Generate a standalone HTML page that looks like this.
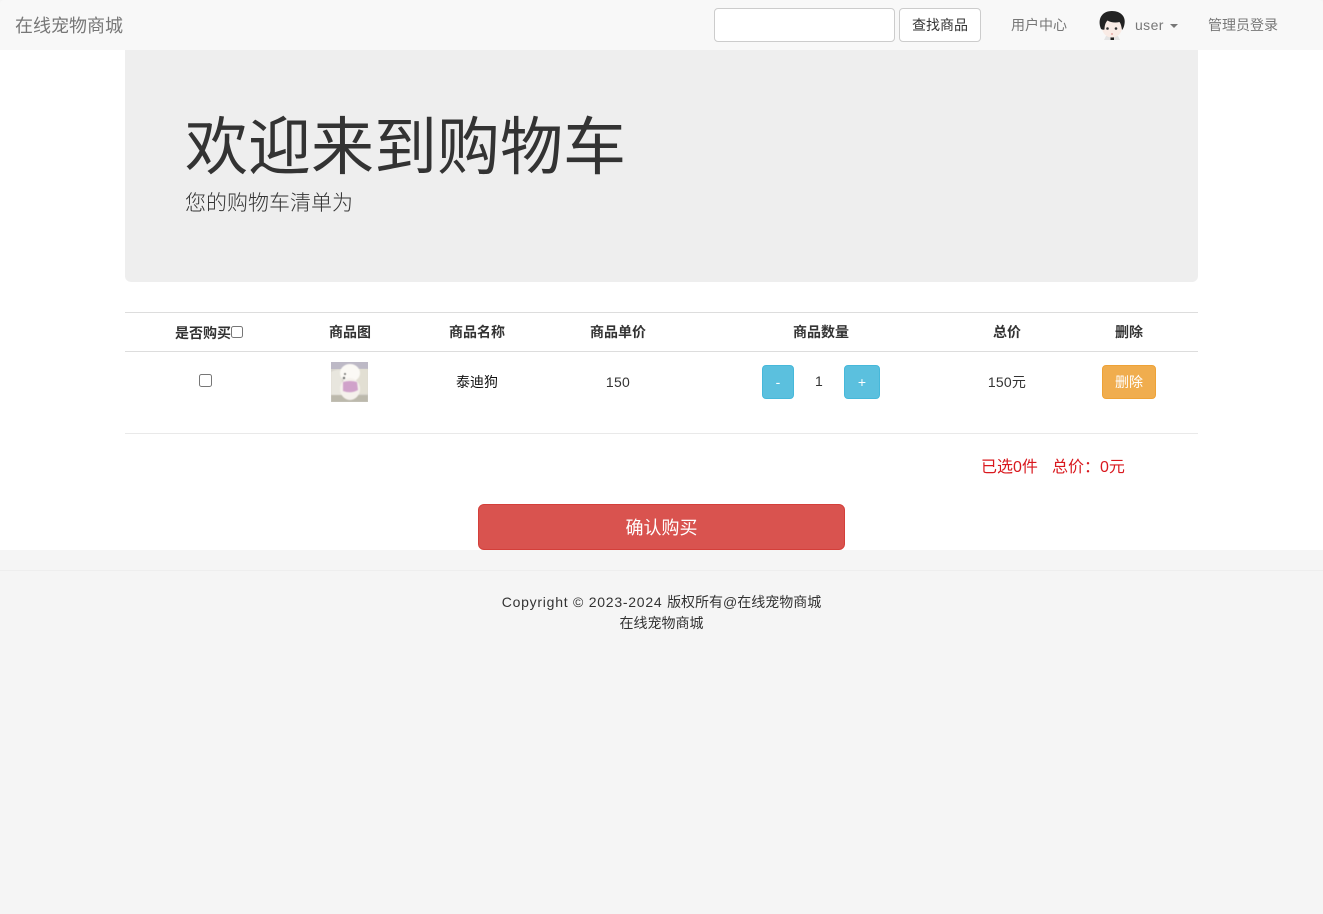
<!DOCTYPE html>
<html lang="zh-CN">
<head>
<meta charset="utf-8">
<title>在线宠物商城</title>
<style>
*{box-sizing:border-box}
html,body{margin:0;padding:0}
body{width:1323px;height:914px;position:relative;overflow:hidden;background:#f5f5f5;font-family:"Liberation Sans","Noto Sans CJK SC",sans-serif;font-size:14px;color:#333}
.a{position:absolute;white-space:nowrap;line-height:20px}
.c{text-align:center}
.b{position:absolute}
.h{font-weight:700;font-size:14px;top:322px}
</style>
</head>
<body>
<div class="b" style="left:0;top:50px;width:1323px;height:500px;background:#fff"></div>
<div class="b" style="left:125px;top:40px;width:1073px;height:242px;background:#eee;border-radius:0 0 6px 6px"></div>
<div class="b" style="left:0;top:0;width:1323px;height:50px;background:#f8f8f8;border-radius:4px 4px 0 0"></div>
<div class="a" style="left:15px;top:16px;font-size:18px;color:#777">在线宠物商城</div>
<div class="b" style="left:714px;top:8px;width:181px;height:34px;background:#fff;border:1px solid #ccc;border-radius:4px"></div>
<div class="b c" style="left:899px;top:8px;width:82px;height:34px;background:#fff;border:1px solid #ccc;border-radius:4px;line-height:32px;color:#333">查找商品</div>
<div class="a" style="left:1011px;top:15px;color:#777">用户中心</div>
<svg class="b" style="left:1096px;top:8px" width="32" height="34" viewBox="0 0 32 34">
<path d="M10 28h12l2 4H8z" fill="#e4e4e4"/>
<rect x="14.500" y="28" width="3.500" height="4" fill="#222"/>
<ellipse cx="16" cy="19.500" rx="10" ry="10" fill="#f9ebe5"/>
<path d="M5 21C1 11 6 3 16 3c9 0 14 6 12.500 13-.5 3-1.500 5-2.500 6-.5-3-1-6-2.500-8-4 1-9 .5-12-1.500-2 2-3 5-3 9-1.500.5-2.500 0-3.500-.5z" fill="#222"/>
<circle cx="11.500" cy="20.500" r="1.300" fill="#333"/>
<circle cx="20" cy="20.500" r="1.300" fill="#333"/>
<path d="M15 26h2" stroke="#d88" stroke-width="1"/>
</svg>
<div class="a" style="left:1135px;top:15px;color:#777;letter-spacing:.4px">user</div>
<div class="b" style="left:1170px;top:24px;width:0;height:0;border-top:4px solid #777;border-left:4px solid transparent;border-right:4px solid transparent"></div>
<div class="a" style="left:1208px;top:15px;color:#777">管理员登录</div>
<div class="a" style="left:185px;top:108px;font-size:63px;line-height:80px;color:#333;font-weight:400">欢迎来到购物车</div>
<div class="a" style="left:185px;top:189px;font-size:21px;line-height:30px;color:#333;font-weight:300">您的购物车清单为</div>
<div class="b" style="left:125px;top:312px;width:1073px;height:1px;background:#ddd"></div>
<div class="b" style="left:125px;top:351px;width:1073px;height:1px;background:#ddd"></div>
<div class="b" style="left:125px;top:433px;width:1073px;height:1px;background:#e9e9e9"></div>
<div class="a h" style="left:175px;top:323px">是否购买</div>
<div class="b" style="left:231px;top:326px;width:12px;height:12px;background:#fff;border:1px solid #767676;border-radius:2.500px"></div>
<div class="a c h" style="left:300px;width:100px">商品图</div>
<div class="a c h" style="left:427px;width:100px">商品名称</div>
<div class="a c h" style="left:568px;width:100px">商品单价</div>
<div class="a c h" style="left:771px;width:100px">商品数量</div>
<div class="a c h" style="left:957px;width:100px">总价</div>
<div class="a c h" style="left:1079px;width:100px">删除</div>
<div class="b" style="left:199px;top:374px;width:13px;height:13px;background:#fff;border:1px solid #767676;border-radius:2.500px"></div>
<svg class="b" style="left:331px;top:362px" width="37" height="40" viewBox="0 0 37 40">
<rect width="37" height="40" fill="#d8d5ce"/>
<rect width="37" height="7" fill="#bdb9c6"/>
<g style="filter:blur(.6px)">
<path d="M0 10q5-3 11-2v26H0z" fill="#e8e6de"/>
<path d="M26 7h11v25H26z" fill="#e2dfd3"/>
<path d="M0 33h37v7H0z" fill="#bcb9ac"/>
<ellipse cx="19" cy="11" rx="10" ry="9" fill="#fbf9f5"/>
<ellipse cx="19" cy="27" rx="10" ry="11" fill="#f5f1ec"/>
<path d="M12 20q7-2 14 0l1 8q-7 4-15 1z" fill="#d0a2ca"/>
<circle cx="14" cy="12" r=".9" fill="#444"/>
<circle cx="13" cy="16" r="1.100" fill="#555"/>
</g>
</svg>
<div class="a c" style="left:427px;width:100px;top:372px;color:#111">泰迪狗</div>
<div class="a c" style="left:568px;width:100px;top:372px;letter-spacing:.3px">150</div>
<div class="b c" style="left:762px;top:365px;width:32px;height:34px;background:#5bc0de;border:1px solid #46b8da;border-radius:4px;color:#fff;line-height:32px">-</div>
<div class="a" style="left:815px;top:371px">1</div>
<div class="b c" style="left:844px;top:365px;width:36px;height:34px;background:#5bc0de;border:1px solid #46b8da;border-radius:4px;color:#fff;line-height:32px">+</div>
<div class="a c" style="left:957px;width:100px;top:372px;letter-spacing:.2px">150元</div>
<div class="b c" style="left:1102px;top:365px;width:54px;height:34px;background:#f0ad4e;border:1px solid #eea236;border-radius:4px;color:#fff;line-height:32px">删除</div>
<div class="a" style="left:981px;top:458px;font-size:16px;color:#d9181e">已选0件</div>
<div class="a" style="left:1052px;top:458px;font-size:16px;color:#d9181e">总价：0元</div>
<div class="b c" style="left:478px;top:504px;width:367px;height:46px;background:#d9534f;border:1px solid #d43f3a;border-radius:6px;color:#fff;font-size:18px;line-height:46px">确认购买</div>
<div class="b" style="left:0;top:570px;width:1323px;height:1px;background:#eee"></div>
<div class="a c" style="left:0;width:1323px;top:592px"><span style="letter-spacing:.75px">Copyright © 2023-2024 </span>版权所有@在线宠物商城</div>
<div class="a c" style="left:0;width:1323px;top:613px">在线宠物商城</div>
</body>
</html>
